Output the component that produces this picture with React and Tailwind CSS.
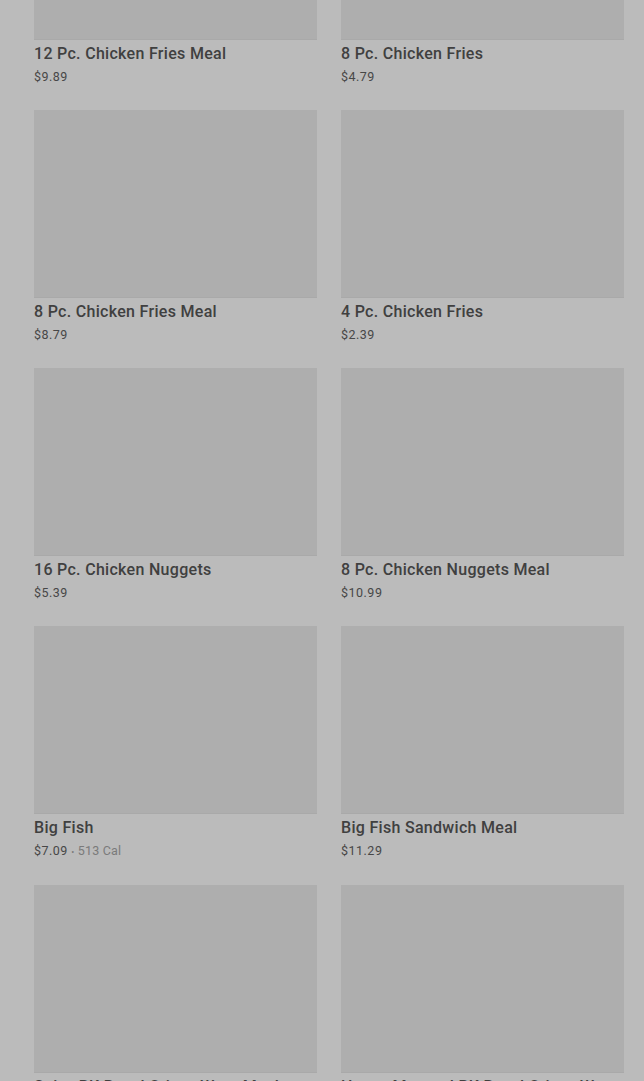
import React from "react";

const items = [
  { name: "12 Pc. Chicken Fries Meal", price: "$9.89" },
  { name: "8 Pc. Chicken Fries", price: "$4.79" },
  { name: "8 Pc. Chicken Fries Meal", price: "$8.79" },
  { name: "4 Pc. Chicken Fries", price: "$2.39" },
  { name: "16 Pc. Chicken Nuggets", price: "$5.39" },
  { name: "8 Pc. Chicken Nuggets Meal", price: "$10.99" },
  { name: "Big Fish", price: "$7.09", cal: "513 Cal" },
  { name: "Big Fish Sandwich Meal", price: "$11.29" },
  { name: "Spicy BK Royal Crispy Wrap Meal", price: "$8.49" },
  { name: "Honey Mustard BK Royal Crispy Wrap Meal", price: "$8.49" },
];

function MenuCard({ item }) {
  return (
    <div className="min-w-0">
      <div className="h-[188px] bg-[#aeaeae] border-b border-[#a9a9a9]" />
      <div className="mt-[4px] text-[16px] leading-[20px] font-medium tracking-[0.3px] text-[#404040] truncate">
        {item.name}
      </div>
      <div className="mt-[4px] text-[12.5px] leading-[18px] tracking-[0.5px] text-[#474747]">
        {item.price}
        {item.cal && (
          <span className="text-[#7a7a7a] tracking-[0.2px]">
            {" "}
            <span className="text-[9px]">•</span> {item.cal}
          </span>
        )}
      </div>
    </div>
  );
}

export default function App() {
  return (
    <div
      className="h-[1081px] overflow-hidden bg-[#bbbbbb]"
      style={{ fontFamily: "Roboto, 'Liberation Sans', sans-serif" }}
    >
      <div className="mt-[-148px] pl-[34px] pr-[20px] grid grid-cols-2 gap-x-[24px] gap-y-[24px]">
        {items.map((item) => (
          <MenuCard key={item.name} item={item} />
        ))}
      </div>
    </div>
  );
}
